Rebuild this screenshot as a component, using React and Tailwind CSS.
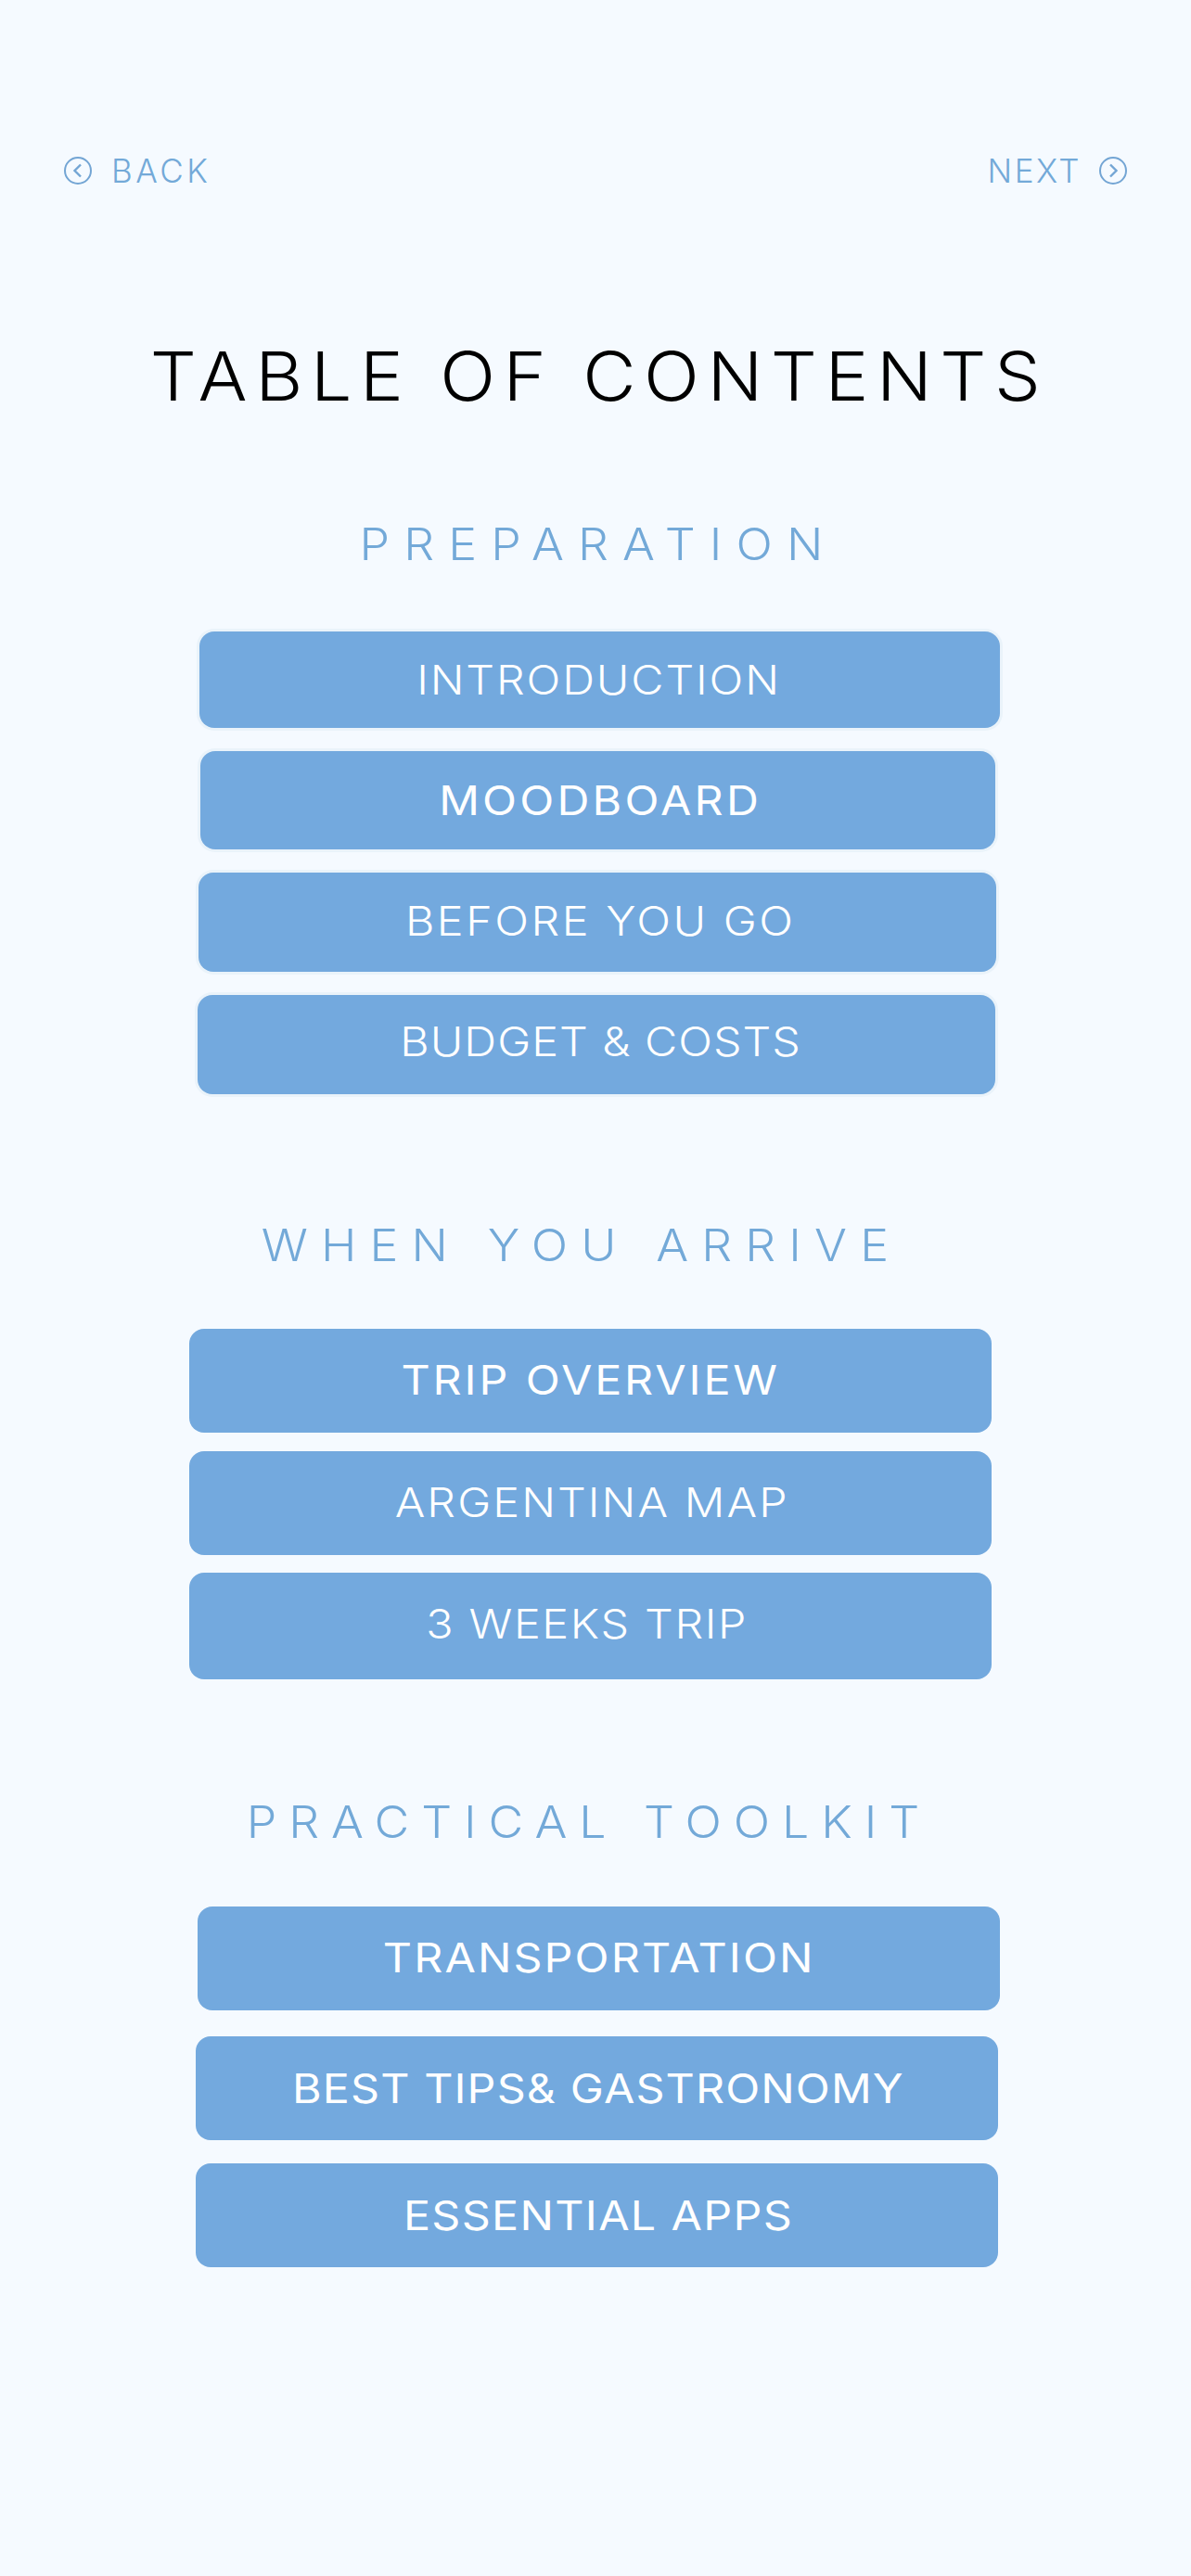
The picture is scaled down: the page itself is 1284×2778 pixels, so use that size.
const BTN = "flex items-center justify-center rounded-[16px] bg-[#73a9de] text-white text-[44px] whitespace-nowrap";
const RING = "ring-[3px] ring-[#eaf3fa]";
const HEAD = "text-center text-[#73a9d8] text-[48px] leading-[56px] font-light whitespace-nowrap scale-x-[1.08]";

function Btn({ className, textClass, label }) {
  return (
    <div className={BTN + " " + className}>
      <span className={"scale-x-[1.1] " + textClass}>{label}</span>
    </div>
  );
}

function CircleArrow({ d }) {
  return (
    <svg width="32" height="32" viewBox="0 0 32 32" fill="none" stroke="#73a5d4" strokeWidth="2">
      <circle cx="16" cy="16" r="14" />
      <path d={d} strokeWidth="2.4" />
    </svg>
  );
}

export default function App() {
  return (
    <div className="w-[1284px] h-[2778px] bg-[#f5faff] overflow-hidden pt-[160px] font-[Inter]">
      <div className="flex justify-between items-center h-[48px] px-[68px] text-[#73a9d8] text-[35px] font-light">
        <div className="flex items-center gap-[20px] tracking-[3.5px]">
          <CircleArrow d="M19 9.5 L12.5 16 L19 22.5" />
          <span>BACK</span>
        </div>
        <div className="flex items-center gap-[18px] tracking-[2.5px]">
          <span>NEXT</span>
          <CircleArrow d="M13 9.5 L19.5 16 L13 22.5" />
        </div>
      </div>

      <h1 className="mt-[153px] text-center text-black text-[73px] leading-[90px] tracking-[7.9px] font-light whitespace-nowrap scale-x-[1.08] translate-x-[4px]">TABLE OF CONTENTS</h1>

      <section className="flex flex-col">
        <h2 className={HEAD + " mt-[108px] tracking-[14px] translate-x-[3px]"}>PREPARATION</h2>
        <Btn label="INTRODUCTION" className={"mt-[66px] ml-[215px] w-[863px] h-[104px] font-light " + RING} textClass="tracking-[1.7px] -translate-x-[1px]" />
        <Btn label="MOODBOARD" className={"mt-[25px] ml-[216px] w-[857px] h-[106px] font-normal " + RING} textClass="tracking-[2.9px] translate-x-[3px]" />
        <Btn label="BEFORE YOU GO" className={"mt-[25px] ml-[214px] w-[860px] h-[107px] font-light " + RING} textClass="tracking-[2.3px] translate-x-[3px] -translate-y-[2px]" />
        <Btn label="BUDGET & COSTS" className={"mt-[25px] ml-[213px] w-[860px] h-[107px] font-light " + RING} textClass="tracking-[0.9px] translate-x-[5px] -translate-y-[4px]" />
      </section>

      <section className="flex flex-col">
        <h2 className={HEAD + " mt-[135px] tracking-[13.1px] -translate-x-[15px]"}>WHEN YOU ARRIVE</h2>
        <Btn label="TRIP OVERVIEW" className="mt-[62px] ml-[204px] w-[865px] h-[112px] font-normal" textClass="tracking-[2.6px] -translate-y-[1px]" />
        <Btn label="ARGENTINA MAP" className="mt-[20px] ml-[204px] w-[865px] h-[112px] font-light" textClass="tracking-[1.9px] translate-x-[2px] -translate-y-[1px]" />
        <Btn label="3 WEEKS TRIP" className="mt-[19px] ml-[204px] w-[865px] h-[115px] font-light" textClass="tracking-[1.5px] -translate-x-[4px] -translate-y-[3px]" />
      </section>

      <section className="flex flex-col">
        <h2 className={HEAD + " mt-[126px] tracking-[12px] -translate-x-[7px]"}>PRACTICAL TOOLKIT</h2>
        <Btn label="TRANSPORTATION" className="mt-[63px] ml-[213px] w-[865px] h-[112px] font-normal" textClass="tracking-[1.9px] -translate-y-[1px]" />
        <Btn label="BEST TIPS& GASTRONOMY" className="mt-[28px] ml-[211px] w-[865px] h-[112px] font-normal" textClass="tracking-[1px] translate-x-[1px]" />
        <Btn label="ESSENTIAL APPS" className="mt-[25px] ml-[211px] w-[865px] h-[112px] font-normal" textClass="tracking-[1.2px] translate-x-[1px]" />
      </section>
    </div>
  );
}
